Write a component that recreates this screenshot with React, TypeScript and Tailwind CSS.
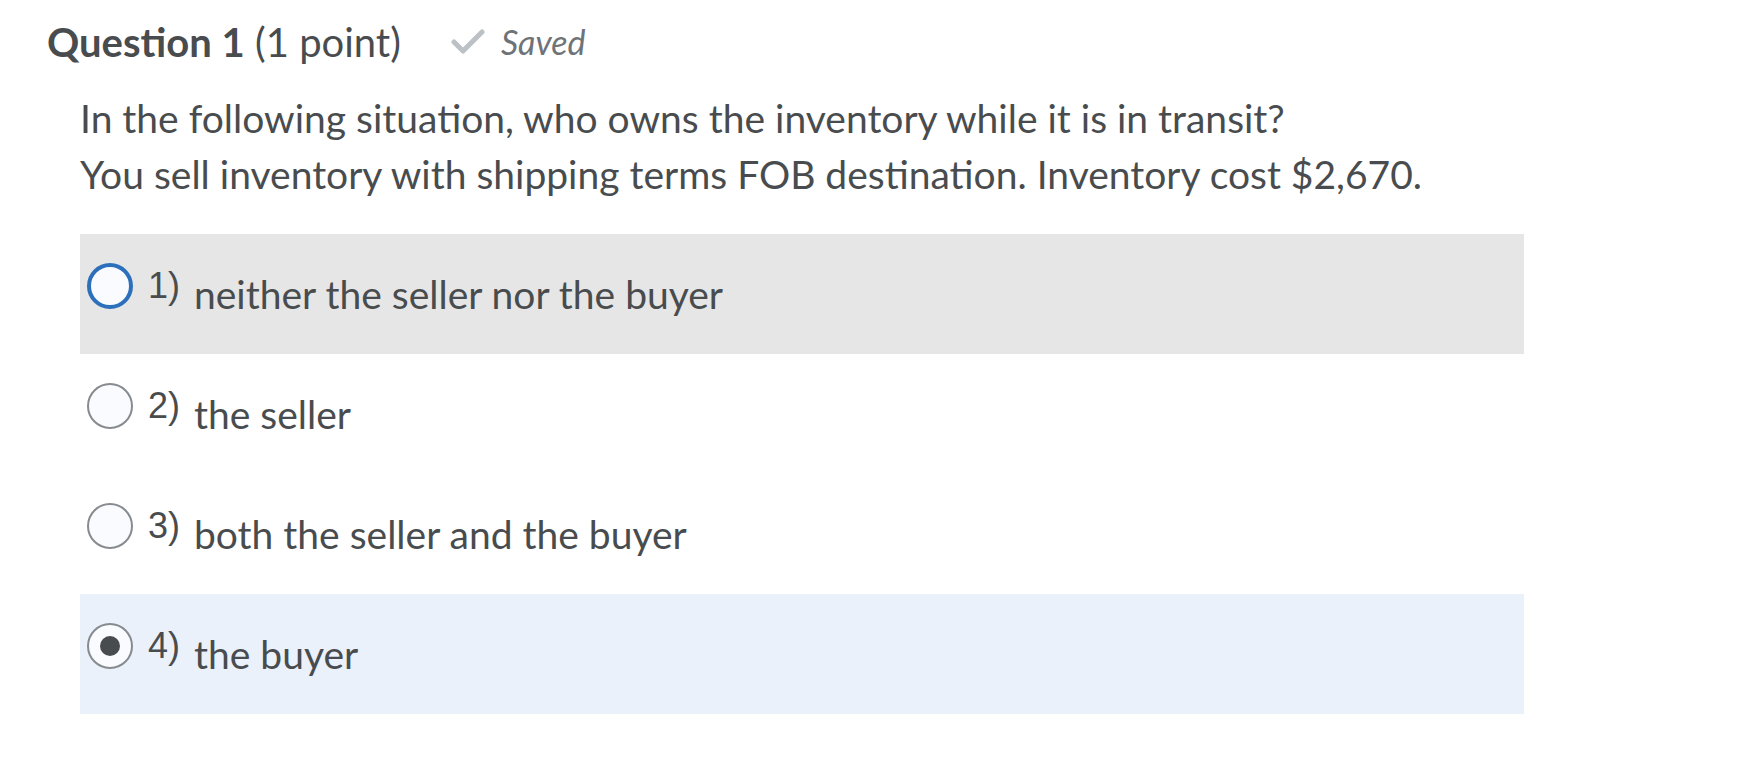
import React from "react";

type Opt = { n: string; text: string; state: "focus" | "none" | "checked"; bg: string };

const options: Opt[] = [
  { n: "1)", text: "neither the seller nor the buyer", state: "focus", bg: "bg-[#e6e6e6]" },
  { n: "2)", text: "the seller", state: "none", bg: "bg-white" },
  { n: "3)", text: "both the seller and the buyer", state: "none", bg: "bg-white" },
  { n: "4)", text: "the buyer", state: "checked", bg: "bg-[#eaf1fb]" },
];

function Radio({ state }: { state: Opt["state"] }) {
  if (state === "focus") {
    return (
      <div className="w-[46px] h-[46px] shrink-0 rounded-full border-[4px] border-[#2c6fbb] bg-[#f9fbff]" />
    );
  }
  return (
    <div className="w-[46px] h-[46px] shrink-0 rounded-full border-2 border-[#868b8f] bg-[#f9fbff] flex items-center justify-center">
      {state === "checked" && <div className="w-[20px] h-[20px] rounded-full bg-[#494c4e]" />}
    </div>
  );
}

export default function App() {
  return (
    <div className="w-full h-[768px] bg-white font-[Lato,sans-serif] text-[#494c4e]">
      <div className="flex items-center pl-[47px] pt-[19px] h-[64px]">
        <span className="text-[40px] leading-[46px]">
          <span className="font-bold">Question 1</span> (1 point)
        </span>
        <svg className="ml-[50px]" width="34" height="26" viewBox="0 0 34 26" fill="none">
          <path d="M3 13 L12 22 L31 3" stroke="#bcc1c5" strokeWidth="5" strokeLinecap="round" strokeLinejoin="round" />
        </svg>
        <span className="ml-[16px] italic text-[34px] text-[#6e7377]">Saved</span>
      </div>
      <div className="pl-[80px] pt-[26px] text-[39px]">
        <p className="leading-[56px]">In the following situation, who owns the inventory while it is in transit?</p>
        <p className="leading-[56px]">You sell inventory with shipping terms FOB destination. Inventory cost $2,670.</p>
      </div>
      <div className="ml-[80px] w-[1444px] mt-[32px] flex flex-col">
        {options.map((o) => (
          <div key={o.n} className={`h-[120px] flex items-start pt-[29px] pl-[7px] ${o.bg}`}>
            <Radio state={o.state} />
            <span className="ml-[15px] font-['Liberation_Sans',Arial,sans-serif] text-[36px] leading-[46px]">{o.n}</span>
            <span className="ml-[14px] mt-[8px] text-[39px] leading-[46px]">{o.text}</span>
          </div>
        ))}
      </div>
    </div>
  );
}
